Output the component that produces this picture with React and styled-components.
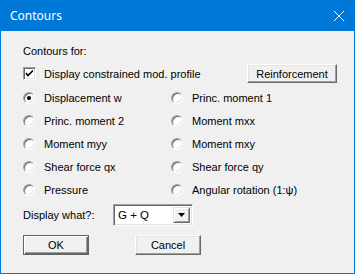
import styled, { createGlobalStyle } from "styled-components";

const GlobalStyle = createGlobalStyle`
  html, body {
    margin: 0;
    padding: 0;
    background: #ffffff;
  }
  body {
    font-family: "Liberation Sans", Arial, sans-serif;
    font-size: 11px;
    color: #000000;
  }
`;

const Window = styled.div`
  box-sizing: border-box;
  width: 355px;
  height: 274px;
  border: 1px solid #0078d7;
  background: #f0f0f0;
  display: flex;
  flex-direction: column;
`;

const TitleBar = styled.div`
  height: 30px;
  background: #0078d7;
  color: #ffffff;
  display: flex;
  align-items: center;
  justify-content: space-between;
  padding: 0 9px 0 9px;
  font-family: "Noto Sans", "Open Sans", sans-serif;
  font-size: 12px;
`;

const Title = styled.span`
  margin-top: -1px;
`;

const CloseIcon = styled.svg`
  display: block;
  margin-top: -1px;
`;

const Body = styled.div`
  flex: 1;
  display: flex;
  flex-direction: column;
  padding: 14px 17px 0 22px;
`;

const Label = styled.div`
  height: 13px;
  line-height: 13px;
  white-space: nowrap;
`;

const CheckRow = styled.div`
  margin-top: 6px;
  height: 19px;
  display: flex;
  align-items: center;
  justify-content: space-between;
`;

const Option = styled.label`
  display: flex;
  align-items: center;
  gap: ${({ $gap }) => $gap}px;
  white-space: nowrap;
`;

const CheckBox = styled.span`
  box-sizing: border-box;
  width: 13px;
  height: 13px;
  background: #ffffff;
  border: 1px solid;
  border-color: #a0a0a0 #ffffff #ffffff #a0a0a0;
  box-shadow: inset 1px 1px 0 #696969, inset -1px -1px 0 #e3e3e3;
  display: flex;
  align-items: center;
  justify-content: center;
`;

const RadioGrid = styled.div`
  margin-top: 3px;
  display: grid;
  grid-template-columns: 148px 1fr;
  grid-auto-rows: 23px;
`;

const Radio = styled.span`
  box-sizing: border-box;
  width: 12px;
  height: 12px;
  border-radius: 50%;
  background: #ffffff;
  border: 1px solid;
  border-color: #a0a0a0 #ffffff #ffffff #a0a0a0;
  box-shadow: inset 1px 1px 0 #696969, inset -1px -1px 0 #e3e3e3;
  display: flex;
  align-items: center;
  justify-content: center;

  &::after {
    content: "";
    width: 4px;
    height: 4px;
    border-radius: 50%;
    background: #000000;
    display: ${({ $checked }) => ($checked ? "block" : "none")};
  }
`;

const Button = styled.button`
  box-sizing: border-box;
  width: ${({ $width }) => $width}px;
  height: ${({ $height }) => $height}px;
  padding: 0;
  font-family: inherit;
  font-size: 11px;
  color: #000000;
  background: #f0f0f0;
  border: 1px solid;
  border-color: #ffffff #696969 #696969 #ffffff;
  box-shadow: inset -1px -1px 0 #a0a0a0, inset 1px 1px 0 #e3e3e3;
`;

const DefaultButton = styled(Button)`
  border: 1px solid #646464;
  box-shadow: inset 1px 1px 0 #ffffff, inset -1px -1px 0 #646464,
    inset -2px -2px 0 #a0a0a0;
`;

const SelectRow = styled.div`
  margin-top: 3px;
  height: 22px;
  display: flex;
  align-items: center;
`;

const SelectLabel = styled.span`
  width: 90px;
  white-space: nowrap;
`;

const Combo = styled.div`
  box-sizing: border-box;
  width: 80px;
  height: 22px;
  background: #ffffff;
  border: 1px solid;
  border-color: #a0a0a0 #ffffff #ffffff #a0a0a0;
  box-shadow: inset 1px 1px 0 #696969, inset -1px -1px 0 #e3e3e3;
  display: flex;
  align-items: stretch;
  padding: 2px;
`;

const ComboValue = styled.span`
  flex: 1;
  display: flex;
  align-items: center;
  padding-left: 2px;
  font-size: 11.5px;
`;

const ComboArrow = styled.span`
  box-sizing: border-box;
  width: 17px;
  background: #f0f0f0;
  border: 1px solid;
  border-color: #e3e3e3 #696969 #696969 #e3e3e3;
  box-shadow: inset 1px 1px 0 #ffffff, inset -1px -1px 0 #a0a0a0;
  display: flex;
  align-items: center;
  justify-content: center;
`;

const ButtonRow = styled.div`
  margin-top: 9px;
  display: flex;
  gap: 46px;
`;

const OPTIONS = [
  ["Displacement w", "Princ. moment 1"],
  ["Princ. moment 2", "Moment mxx"],
  ["Moment myy", "Moment mxy"],
  ["Shear force qx", "Shear force qy"],
  ["Pressure", "Angular rotation (1:\u03c8)"],
];

export default function App() {
  return (
    <>
      <GlobalStyle />
      <Window>
        <TitleBar>
          <Title>Contours</Title>
          <CloseIcon width="12" height="12" viewBox="0 0 12 12">
            <path d="M1 1 L11 11 M11 1 L1 11" stroke="#ffffff" strokeWidth="1" />
          </CloseIcon>
        </TitleBar>
        <Body>
          <Label>Contours for:</Label>
          <CheckRow>
            <Option $gap={8}>
              <CheckBox>
                <svg width="9" height="9" viewBox="0 0 9 9">
                  <path d="M1 4 L3 6.5 L8 1.5" stroke="#000" strokeWidth="1.6" fill="none" />
                </svg>
              </CheckBox>
              Display constrained mod. profile
            </Option>
            <Button $width={90} $height={19}>Reinforcement</Button>
          </CheckRow>
          <RadioGrid>
            {OPTIONS.flat().map((text, i) => (
              <Option key={text} $gap={9}>
                <Radio $checked={i === 0} />
                {text}
              </Option>
            ))}
          </RadioGrid>
          <SelectRow>
            <SelectLabel>Display what?:</SelectLabel>
            <Combo>
              <ComboValue>G + Q</ComboValue>
              <ComboArrow>
                <svg width="7" height="4" viewBox="0 0 7 4">
                  <path d="M0 0 H7 L3.5 4 Z" fill="#000" />
                </svg>
              </ComboArrow>
            </Combo>
          </SelectRow>
          <ButtonRow>
            <DefaultButton $width={66} $height={20}>OK</DefaultButton>
            <Button $width={66} $height={20}>Cancel</Button>
          </ButtonRow>
        </Body>
      </Window>
    </>
  );
}
